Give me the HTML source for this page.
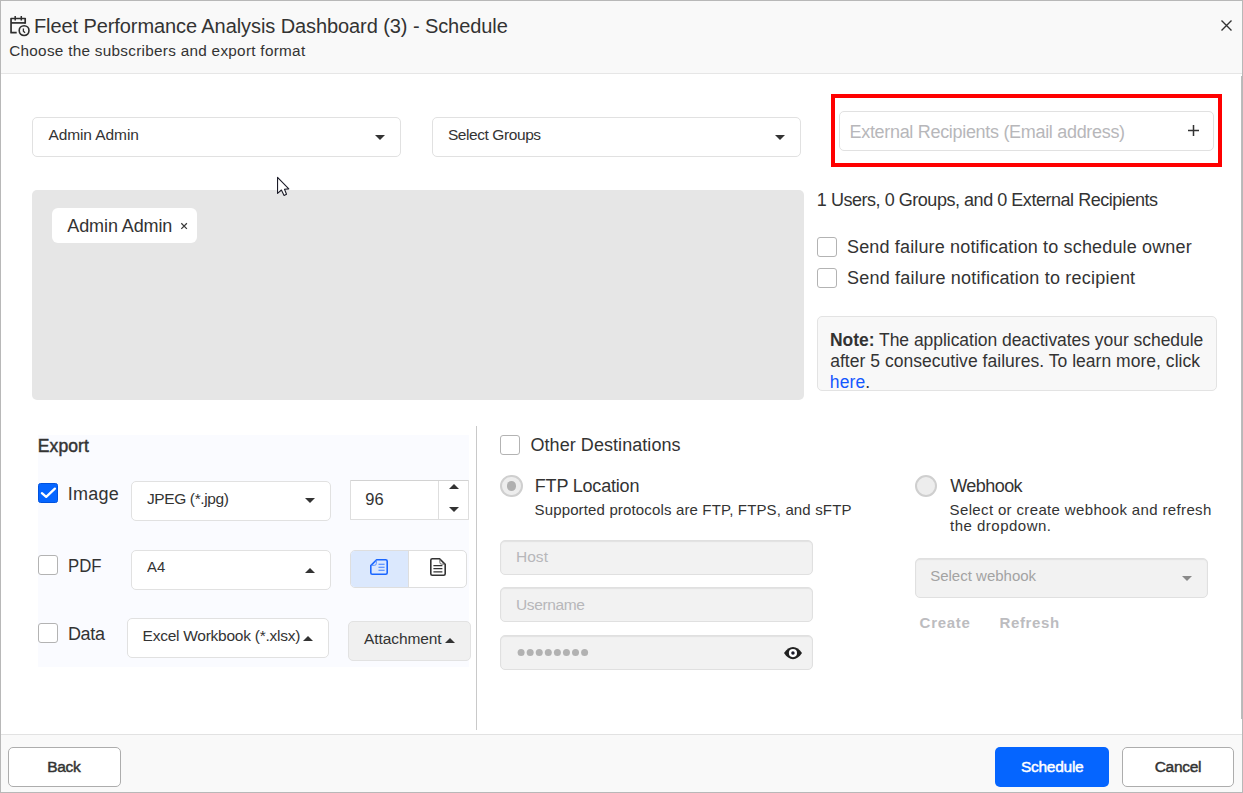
<!DOCTYPE html>
<html lang="en"><head><meta charset="utf-8"><title>Schedule</title>
<style>
html,body{margin:0;padding:0;}
body{width:1243px;height:793px;position:relative;overflow:hidden;background:#fff;font-family:"Liberation Sans",Arial,sans-serif;}
.a{position:absolute;box-sizing:border-box;}
.t{position:absolute;white-space:pre;line-height:1.117;}
.hdr{left:0;top:0;width:1243px;height:74px;background:#f9f9f9;border-bottom:1px solid #e6e6e6;}
.ftr{left:0;top:734px;width:1243px;height:59px;background:#f9f9f9;border-top:1px solid #e2e2e2;}
.frame{left:0;top:0;width:1243px;height:793px;border:1px solid #b8b8b8;pointer-events:none;}
.dd{background:#fff;border:1px solid #e1e1e1;border-radius:5px;}
.dis{background:#f2f2f2;border:1px solid #e0e0e0;border-radius:5px;box-shadow:inset 0 1px 1px #e2e2e2;}
.cb{background:#fff;border:1px solid #b3b3b3;border-radius:3px;}
.rd{background:#ededed;border:2px solid #cfcfcf;border-radius:50%;}
.btn{border-radius:5px;}
svg{position:absolute;overflow:visible;}

</style></head>
<body>
<div class="a hdr"></div>
<div class="a ftr"></div>

<!-- header icon + close -->
<svg style="left:9px;top:15px" width="22" height="22" viewBox="0 0 22 22" fill="none" stroke="#2e2e2e" stroke-width="1.7" stroke-linejoin="round">
  <path d="M7.7 17.7H2.05V3.5H16.2V8.7"/><path d="M2.05 7.9H16.2"/><path d="M6.2 0.9V5.6M12.3 0.9V5.6" stroke-width="1.5"/>
  <circle cx="15.1" cy="15.6" r="4.9" stroke-width="1.6"/><path d="M14.4 13.6V16.2L16.1 17.7" stroke-width="1.3"/>
</svg>
<svg style="left:1221px;top:20px" width="11" height="11" viewBox="0 0 11 11" stroke="#333" stroke-width="1.4"><path d="M0.5 0.5L10.5 10.5M10.5 0.5L0.5 10.5"/></svg>

<!-- row 1 -->
<div class="a dd" style="left:32px;top:117px;width:369px;height:40px"></div>
<svg style="left:375px;top:135px" width="10" height="5" viewBox="0 0 10 5"><path d="M0 0h10L5 5z" fill="#333"/></svg>
<div class="a dd" style="left:432px;top:117px;width:369px;height:40px"></div>
<svg style="left:775px;top:135px" width="10" height="5" viewBox="0 0 10 5"><path d="M0 0h10L5 5z" fill="#333"/></svg>
<div class="a" style="left:831px;top:94px;width:391px;height:73px;border:4px solid #ff0000"></div>
<div class="a dd" style="left:839px;top:111px;width:375px;height:40px"></div>
<svg style="left:1187.5px;top:125px" width="11" height="11" viewBox="0 0 11 11" stroke="#333" stroke-width="1.5"><path d="M5.5 0v11M0 5.5h11"/></svg>

<!-- subscribers box -->
<div class="a" style="left:32px;top:190px;width:772.2px;height:210.4px;background:#e6e6e6;border-radius:5px"></div>
<div class="a" style="left:52px;top:207.7px;width:145.4px;height:35px;background:#fff;border-radius:6px"></div>
<svg style="left:181.1px;top:223px" width="6.2" height="6.2" viewBox="0 0 6.2 6.2" stroke="#3a3a3a" stroke-width="1.25"><path d="M0.3 0.3L5.9 5.9M5.9 0.3L0.3 5.9"/></svg>
<!-- cursor -->
<svg style="left:277px;top:177px" width="13" height="21" viewBox="0 0 13 21"><path d="M0.55 0.4V16.4L4.4 13L7.1 18.5L9.5 17.3L7.5 12.3L11.8 11.9Z" fill="#fff" stroke="#1c1c28" stroke-width="1.1" stroke-linejoin="round"/></svg>

<!-- right info -->
<div class="a cb" style="left:817px;top:237px;width:20px;height:20px"></div>
<div class="a cb" style="left:817px;top:268px;width:20px;height:20px"></div>
<div class="a" style="left:817px;top:316px;width:400px;height:75px;background:#f8f8f8;border:1px solid #e3e3e3;border-radius:5px"></div>

<!-- export -->
<div class="a" style="left:38px;top:434.5px;width:431px;height:232px;background:#fafbff"></div>
<div class="a" style="left:38px;top:483px;width:20px;height:20px;background:#0565ff;border:1px solid #0052de;border-radius:2.5px"></div>
<svg style="left:38px;top:483px" width="20" height="20" viewBox="0 0 20 20" fill="none" stroke="#fff" stroke-width="2.3"><path d="M3.9 10.2L8.2 13.9L16.9 5.6" stroke-linecap="round" stroke-linejoin="round"/></svg>
<div class="a dd" style="left:131px;top:481px;width:200px;height:40px"></div>
<svg style="left:305px;top:498px" width="10" height="5" viewBox="0 0 10 5"><path d="M0 0h10L5 5z" fill="#333"/></svg>
<div class="a" style="left:350px;top:480px;width:119px;height:40px;background:#fff;border:1px solid #dedede;border-top-color:#d2d2d2;border-radius:1px"></div>
<div class="a" style="left:438px;top:481px;width:1px;height:38px;background:#dedede"></div>
<svg style="left:449px;top:483.6px" width="10" height="5" viewBox="0 0 10 5"><path d="M0 5h10L5 0z" fill="#333"/></svg>
<svg style="left:449px;top:507.2px" width="10" height="5" viewBox="0 0 10 5"><path d="M0 0h10L5 5z" fill="#333"/></svg>

<div class="a cb" style="left:38px;top:555px;width:20px;height:20px"></div>
<div class="a dd" style="left:131px;top:550px;width:200px;height:40px"></div>
<svg style="left:305px;top:567.5px" width="10" height="5" viewBox="0 0 10 5"><path d="M0 5h10L5 0z" fill="#333"/></svg>
<div class="a" style="left:350px;top:550px;width:117px;height:37.5px;background:#fff;border:1px solid #dedede;border-radius:5px;overflow:hidden"><div style="width:57.6px;height:100%;background:#dbe8fd;border-right:1px solid #dedede;box-sizing:border-box"></div></div>
<!-- landscape icon -->
<svg style="left:370.4px;top:559px" width="18" height="16" viewBox="0 0 18 16" fill="none" stroke="#1a66ff" stroke-width="1.6" stroke-linejoin="round"><path d="M6.6 0.8H15.7Q17.2 0.8 17.2 2.3V13.7Q17.2 15.2 15.7 15.2H2.3Q0.8 15.2 0.8 13.7V6.6Z"/><path d="M6.3 1.4V4.6Q6.3 6.3 4.6 6.3H1.4" stroke-width="1" stroke="#5a90ff"/><path d="M8.5 5.2H14.6M8.5 8.3H14.6M8.5 11.2H14.6" stroke-width="1.1" stroke="#3f7dff"/></svg>
<!-- portrait icon -->
<svg style="left:429.5px;top:558px" width="16" height="18" viewBox="0 0 16 18" fill="none" stroke="#333" stroke-width="1.6" stroke-linejoin="round"><path d="M2.3 0.8H9.6L15.2 6.4V15.7Q15.2 17.2 13.7 17.2H2.3Q0.8 17.2 0.8 15.7V2.3Q0.8 0.8 2.3 0.8Z"/><path d="M9.9 1.4V4.6Q9.9 6.1 11.4 6.1H14.6" stroke-width="1" stroke="#666"/><path d="M3.4 7.7H12.4M3.4 10.7H12.4M3.4 13.8H12.4" stroke-width="1.2"/></svg>

<div class="a cb" style="left:38px;top:623px;width:20px;height:20px"></div>
<div class="a dd" style="left:127px;top:617.5px;width:202px;height:40.5px"></div>
<svg style="left:303px;top:636px" width="10" height="5" viewBox="0 0 10 5"><path d="M0 5h10L5 0z" fill="#333"/></svg>
<div class="a" style="left:348px;top:621px;width:123px;height:40px;background:#f0f0f0;border:1px solid #e2e2e2;border-radius:5px"></div>
<svg style="left:445px;top:638px" width="10" height="5" viewBox="0 0 10 5"><path d="M0 5h10L5 0z" fill="#333"/></svg>

<!-- divider -->
<div class="a" style="left:476px;top:426px;width:1px;height:304px;background:#c9c9c9"></div>

<!-- other destinations -->
<div class="a cb" style="left:500px;top:435px;width:20px;height:20px"></div>
<div class="a rd" style="left:500.2px;top:474.8px;width:22.4px;height:22.4px"></div>
<div class="a" style="left:506.7px;top:481.3px;width:9.4px;height:9.4px;border-radius:50%;background:#b0b0b0"></div>
<div class="a dis" style="left:500px;top:540.3px;width:313.2px;height:34.4px"></div>
<div class="a dis" style="left:500px;top:587.4px;width:313.2px;height:34.4px"></div>
<div class="a dis" style="left:500px;top:635.4px;width:313.2px;height:34.6px"></div>
<svg style="left:517px;top:649px" width="72" height="8" viewBox="0 0 72 8" fill="#b2b2b2"><circle cx="4.10" cy="3.4" r="3.5"/><circle cx="13.17" cy="3.4" r="3.5"/><circle cx="22.24" cy="3.4" r="3.5"/><circle cx="31.31" cy="3.4" r="3.5"/><circle cx="40.38" cy="3.4" r="3.5"/><circle cx="49.45" cy="3.4" r="3.5"/><circle cx="58.52" cy="3.4" r="3.5"/><circle cx="67.59" cy="3.4" r="3.5"/></svg>
<!-- eye -->
<svg style="left:783.8px;top:646.9px" width="18" height="12.2" viewBox="0 0 18 12.2"><path d="M0 6.1C2.6 2 5.6 0 9 0S15.4 2 18 6.1C15.4 10.2 12.4 12.2 9 12.2S2.6 10.2 0 6.1Z" fill="#222"/><circle cx="8.95" cy="6.1" r="4.1" fill="#fff"/><circle cx="8.95" cy="6.1" r="1.75" fill="#1a1a2a"/></svg>

<!-- webhook -->
<div class="a rd" style="left:915px;top:475px;width:22px;height:22px"></div>
<div class="a dis" style="left:915px;top:558px;width:293px;height:40px"></div>
<svg style="left:1182px;top:575.5px" width="10" height="5" viewBox="0 0 10 5"><path d="M0 0h10L5 5z" fill="#8a8a8a"/></svg>

<!-- footer buttons -->
<div class="a btn" style="left:8px;top:747px;width:113px;height:40px;background:#fff;border:1px solid #adadad"></div>
<div class="a btn" style="left:995px;top:747px;width:114px;height:40px;background:#0565ff"></div>
<div class="a btn" style="left:1122px;top:747px;width:112px;height:40px;background:#fff;border:1px solid #adadad"></div>

<!-- scrollbar thumb + frame -->
<div class="a" style="left:1240.8px;top:75.7px;width:1.4px;height:643px;background:#bcbcbc"></div>
<div class="a frame"></div>

<!-- text -->
<span class="t" style="left:33.9px;top:15.00px;font-size:20px;font-weight:400;color:#333;letter-spacing:-0.083px">Fleet Performance Analysis Dashboard (3) - Schedule</span>
<span class="t" style="left:9.2px;top:42.00px;font-size:15.3px;font-weight:400;color:#333;letter-spacing:0.285px">Choose the subscribers and export format</span>
<span class="t" style="left:48.4px;top:126.00px;font-size:15.5px;font-weight:400;color:#333;letter-spacing:-0.085px">Admin Admin</span>
<span class="t" style="left:447.9px;top:126.00px;font-size:15.5px;font-weight:400;color:#333;letter-spacing:-0.417px">Select Groups</span>
<span class="t" style="left:849.5px;top:122.00px;font-size:18px;font-weight:400;color:#b7b7ba;letter-spacing:-0.309px">External Recipients (Email address)</span>
<span class="t" style="left:67.3px;top:216.00px;font-size:18px;font-weight:400;color:#333;letter-spacing:-0.100px">Admin Admin</span>
<span class="t" style="left:816.8px;top:190.00px;font-size:18px;font-weight:400;color:#333;letter-spacing:-0.464px">1 Users, 0 Groups, and 0 External Recipients</span>
<span class="t" style="left:847.0px;top:237.00px;font-size:18px;font-weight:400;color:#333;letter-spacing:0.154px">Send failure notification to schedule owner</span>
<span class="t" style="left:847.0px;top:268.00px;font-size:18px;font-weight:400;color:#333;letter-spacing:0.215px">Send failure notification to recipient</span>
<span class="t" style="left:830.0px;top:331.00px;font-size:17.5px;font-weight:400;color:#333;letter-spacing:-0.040px"><b>Note:</b> The application deactivates your schedule</span>
<span class="t" style="left:830.2px;top:352.00px;font-size:17.5px;font-weight:400;color:#333;letter-spacing:0.031px">after 5 consecutive failures. To learn more, click</span>
<span class="t" style="left:829.8px;top:373.00px;font-size:17.5px;font-weight:400;color:#333;letter-spacing:0.125px"><span style="color:#1457ff">here</span>.</span>
<span class="t" style="left:37.8px;top:437.00px;font-size:17.5px;font-weight:400;-webkit-text-stroke:0.45px currentColor;color:#333;letter-spacing:0.100px">Export</span>
<span class="t" style="left:67.8px;top:484.00px;font-size:18px;font-weight:400;color:#333;letter-spacing:0.225px">Image</span>
<span class="t" style="left:146.9px;top:490.00px;font-size:15.5px;font-weight:400;color:#333;letter-spacing:-0.364px">JPEG (*.jpg)</span>
<span class="t" style="left:365.2px;top:490.00px;font-size:16.5px;font-weight:400;color:#333;letter-spacing:0.200px">96</span>
<span class="t" style="left:68.0px;top:556.00px;font-size:18px;font-weight:400;color:#333;transform:scaleX(0.9304);transform-origin:0 0">PDF</span>
<span class="t" style="left:146.9px;top:558.00px;font-size:15.5px;font-weight:400;color:#333;transform:scaleX(0.9568);transform-origin:0 0">A4</span>
<span class="t" style="left:67.9px;top:624.00px;font-size:18px;font-weight:400;color:#333;letter-spacing:-0.300px">Data</span>
<span class="t" style="left:142.6px;top:627.00px;font-size:15.5px;font-weight:400;color:#333;letter-spacing:-0.257px">Excel Workbook (*.xlsx)</span>
<span class="t" style="left:364.0px;top:630.00px;font-size:15.5px;font-weight:400;color:#333;letter-spacing:-0.083px">Attachment</span>
<span class="t" style="left:530.5px;top:435.00px;font-size:18px;font-weight:400;color:#333;letter-spacing:0.056px">Other Destinations</span>
<span class="t" style="left:534.8px;top:476.00px;font-size:18px;font-weight:400;color:#333;letter-spacing:-0.191px">FTP Location</span>
<span class="t" style="left:534.5px;top:502.00px;font-size:15px;font-weight:400;color:#333;letter-spacing:0.149px">Supported protocols are FTP, FTPS, and sFTP</span>
<span class="t" style="left:515.9px;top:548.00px;font-size:15.5px;font-weight:400;color:#b7b7ba;letter-spacing:0.067px">Host</span>
<span class="t" style="left:515.9px;top:596.00px;font-size:15.5px;font-weight:400;color:#b7b7ba;letter-spacing:-0.343px">Username</span>
<span class="t" style="left:950.2px;top:476.00px;font-size:18px;font-weight:400;color:#333;letter-spacing:-0.550px">Webhook</span>
<span class="t" style="left:949.6px;top:502.00px;font-size:15px;font-weight:400;color:#333;letter-spacing:0.354px">Select or create webhook and refresh</span>
<span class="t" style="left:950.1px;top:518.00px;font-size:15px;font-weight:400;color:#333;letter-spacing:0.483px">the dropdown.</span>
<span class="t" style="left:930.2px;top:568.00px;font-size:15px;font-weight:400;color:#a3a3a3;letter-spacing:0.000px">Select webhook</span>
<span class="t" style="left:919.6px;top:615.00px;font-size:15px;font-weight:700;color:#bcbcbf;letter-spacing:0.710px">Create</span>
<span class="t" style="left:999.6px;top:615.00px;font-size:15px;font-weight:700;color:#bcbcbf;letter-spacing:0.600px">Refresh</span>
<span class="t" style="left:47.3px;top:758.00px;font-size:15.5px;font-weight:400;-webkit-text-stroke:0.45px currentColor;color:#333;letter-spacing:-0.350px">Back</span>
<span class="t" style="left:1021.0px;top:758.00px;font-size:15.5px;font-weight:400;-webkit-text-stroke:0.45px currentColor;color:#fff;letter-spacing:-0.279px">Schedule</span>
<span class="t" style="left:1154.7px;top:758.00px;font-size:15.5px;font-weight:400;-webkit-text-stroke:0.45px currentColor;color:#333;letter-spacing:-0.300px">Cancel</span>
</body></html>
